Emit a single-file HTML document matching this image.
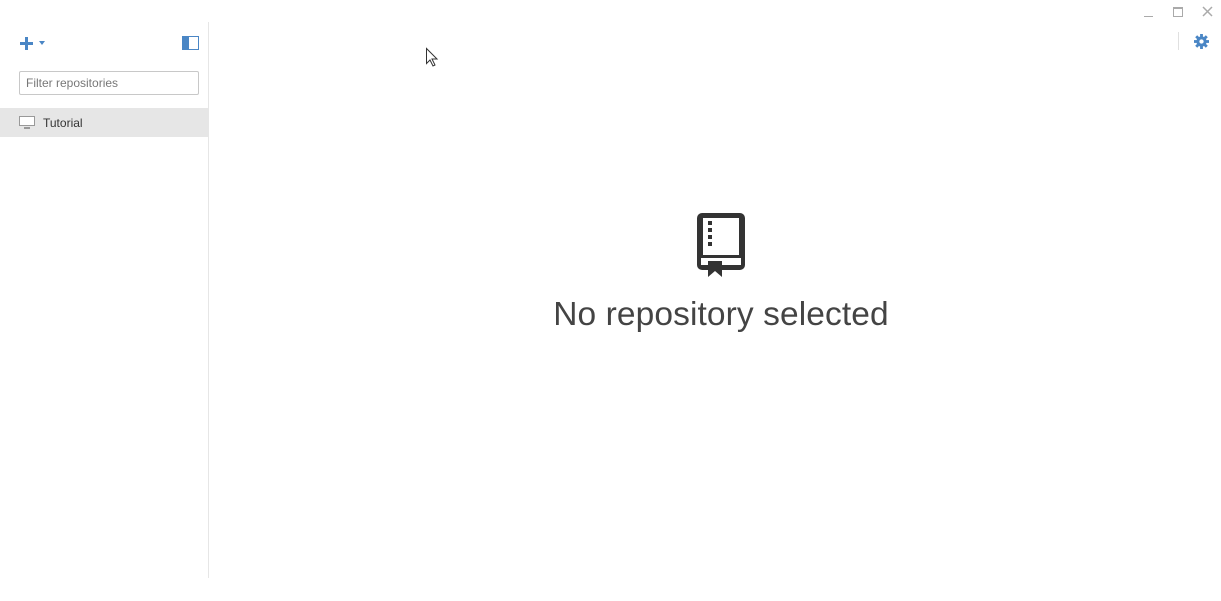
<!DOCTYPE html>
<html><head><meta charset="utf-8"><style>
html,body{margin:0;padding:0;width:1221px;height:601px;background:#fff;overflow:hidden;font-family:"Liberation Sans",sans-serif;position:relative}
.side{position:absolute;left:0;top:22px;width:208px;height:556px;border-right:1px solid #e6e6e6}
.filter{position:absolute;left:19px;top:71px;font-size:12px;color:#777;line-height:22px;padding-left:6px;box-sizing:border-box;width:180px;height:24px;border:1px solid #c8c8c8;border-radius:2px}
.row{position:absolute;left:0;top:108px;width:208px;height:29px;background:#e6e6e6}
.row span{position:absolute;left:43px;top:8px;font-size:12px;color:#333}
.title{position:absolute;left:0;width:1442px;top:296px;text-align:center;font-size:33.5px;color:#444;letter-spacing:0.1px}
</style></head><body>
<div class="side"></div>
<svg style="position:absolute;left:20px;top:37px" width="28" height="13"><rect x="0" y="5" width="13" height="3" fill="#4a86c5"/><rect x="5" y="0" width="3" height="13" fill="#4a86c5"/><path d="M19 4h6l-3 4z" fill="#4a86c5"/></svg>
<svg style="position:absolute;left:182px;top:36px" width="17" height="14"><rect x="0.5" y="0.5" width="16" height="13" fill="#fff" stroke="#4a86c5"/><rect x="0" y="0" width="7" height="14" fill="#4a86c5"/></svg>
<div class="filter">Filter repositories</div>
<div class="row"><svg style="position:absolute;left:19px;top:8px" width="17" height="13"><rect x="0.5" y="0.5" width="15" height="9" fill="#fff" stroke="#999"/><rect x="5" y="11" width="6" height="2" fill="#999"/></svg><span>Tutorial</span></div>
<svg style="position:absolute;left:1144px;top:6px" width="72" height="14"><rect x="0" y="10" width="9" height="1" fill="#aaa"/><rect x="29.5" y="1.5" width="9" height="9" fill="none" stroke="#aaa"/><rect x="29" y="1" width="10" height="2" fill="#aaa"/><path d="M59 1l9 9M68 1l-9 9" stroke="#aaa" stroke-width="1.5"/></svg>
<div style="position:absolute;left:1178px;top:32px;width:1px;height:18px;background:#e0e0e0"></div>
<svg style="position:absolute;left:1194px;top:34px" width="15" height="15" viewBox="0 0 16 16"><g fill="#4a86c5"><circle cx="8" cy="8" r="5.5"/><rect x="6.5" y="0" width="3" height="16"/><rect x="0" y="6.5" width="16" height="3"/><rect x="6.5" y="0" width="3" height="16" transform="rotate(45 8 8)"/><rect x="6.5" y="0" width="3" height="16" transform="rotate(-45 8 8)"/></g><circle cx="8" cy="8" r="2.3" fill="#fff"/></svg>
<svg style="position:absolute;left:425px;top:47px" width="14" height="20"><path d="M1.5 1.5v15l3.5-3.5 3 6 2-1-3-6h5z" fill="#fff" stroke="#333"/></svg>
<svg style="position:absolute;left:697px;top:213px" width="48" height="64"><rect x="0" y="0" width="48" height="57" rx="5" fill="#333"/><rect x="6" y="5" width="36" height="37" fill="#fff"/><rect x="4" y="45" width="40" height="7" fill="#fff"/><rect x="11" y="8" width="4" height="4" fill="#333"/><rect x="11" y="15" width="4" height="4" fill="#333"/><rect x="11" y="22" width="4" height="4" fill="#333"/><rect x="11" y="29" width="4" height="4" fill="#333"/><path d="M11 48h14v16l-7-6-7 6z" fill="#333"/></svg>
<div class="title">No repository selected</div>
</body></html>
